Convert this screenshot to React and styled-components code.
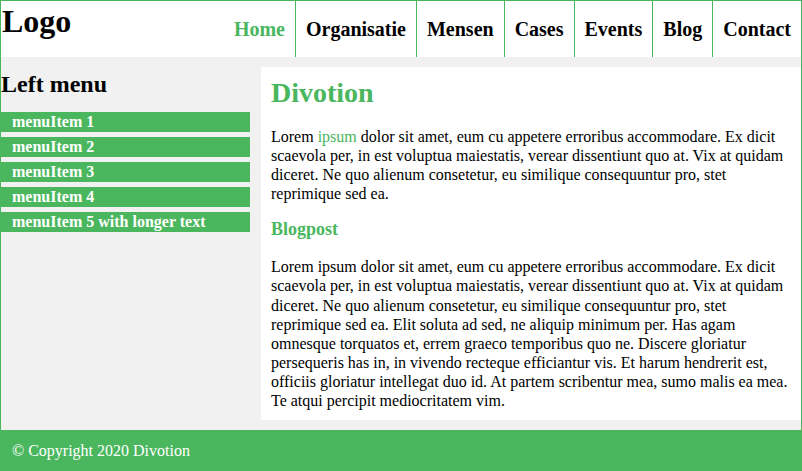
import React from 'react';
import styled, { createGlobalStyle } from 'styled-components';

const GREEN = '#4ab75e';

const GlobalStyle = createGlobalStyle`
  html, body {
    margin: 0;
    padding: 0;
    background: #ffffff;
  }
  body {
    font-family: "Liberation Serif", "Times New Roman", serif;
    color: #000000;
  }
`;

const Page = styled.div`
  width: 802px;
  box-sizing: border-box;
  border: 1px solid ${GREEN};
  border-bottom: none;
  display: flex;
  flex-direction: column;
`;

const Header = styled.header`
  height: 56px;
  display: flex;
  justify-content: space-between;
  background: #ffffff;
`;

const Logo = styled.h1`
  margin: 0;
  padding: 2px 0 0 1px;
  font-size: 32px;
  font-weight: 700;
  line-height: normal;
`;

const Nav = styled.nav`
  display: flex;
  align-items: stretch;
`;

const NavItem = styled.a`
  display: flex;
  align-items: center;
  padding: 0 10px;
  font-size: 20px;
  font-weight: 700;
  text-decoration: none;
  color: ${(p) => (p.$active ? GREEN : '#000000')};
  & + & {
    border-left: 1px solid ${GREEN};
  }
`;

const Main = styled.main`
  display: flex;
  align-items: flex-start;
  background: #f1f1f1;
  padding-bottom: 10px;
`;

const Sidebar = styled.aside`
  width: 260px;
  flex-shrink: 0;
`;

const SideTitle = styled.h2`
  margin: 14px 0 14px;
  font-size: 24px;
  font-weight: 700;
  line-height: 27px;
`;

const MenuList = styled.ul`
  list-style: none;
  margin: 0;
  padding: 0;
`;

const MenuItem = styled.li`
  width: 249px;
  height: 20px;
  line-height: 20px;
  margin-bottom: 5px;
  padding-left: 11px;
  box-sizing: border-box;
  background: ${GREEN};
  color: #ffffff;
  font-size: 16px;
  font-weight: 700;
`;

const Content = styled.section`
  flex: 1;
  margin-top: 10px;
  background: #ffffff;
  padding: 10px;
`;

const Title = styled.h1`
  margin: 0 0 18px;
  font-size: 28px;
  font-weight: 700;
  line-height: 32px;
  color: ${GREEN};
`;

const SubTitle = styled.h3`
  margin: 0 0 17px;
  font-size: 18px;
  font-weight: 700;
  line-height: 21px;
  color: ${GREEN};
`;

const Text = styled.p`
  margin: 0 0 16px;
  font-size: 16px;
  line-height: 19.1px;
  &:last-child {
    margin-bottom: 0;
  }
`;

const Highlight = styled.a`
  color: ${GREEN};
  text-decoration: none;
`;

const Footer = styled.footer`
  height: 41px;
  display: flex;
  align-items: center;
  padding-left: 11px;
  background: ${GREEN};
  color: #ffffff;
  font-size: 16px;
`;

const navLinks = ['Home', 'Organisatie', 'Mensen', 'Cases', 'Events', 'Blog', 'Contact'];
const menuItems = ['menuItem 1', 'menuItem 2', 'menuItem 3', 'menuItem 4', 'menuItem 5 with longer text'];

const App = () => {
  return (
    <>
      <GlobalStyle />
      <Page>
        <Header>
          <Logo>Logo</Logo>
          <Nav>
            {navLinks.map((link) => (
              <NavItem key={link} $active={link === 'Home'}>
                {link}
              </NavItem>
            ))}
          </Nav>
        </Header>
        <Main>
          <Sidebar>
            <SideTitle>Left menu</SideTitle>
            <MenuList>
              {menuItems.map((item) => (
                <MenuItem key={item}>{item}</MenuItem>
              ))}
            </MenuList>
          </Sidebar>
          <Content>
            <Title>Divotion</Title>
            <Text>
              Lorem <Highlight>ipsum</Highlight> dolor sit amet, eum cu appetere erroribus accommodare. Ex dicit
              scaevola per, in est voluptua maiestatis, verear dissentiunt quo at. Vix at quidam diceret. Ne quo
              alienum consetetur, eu similique consequuntur pro, stet reprimique sed ea.
            </Text>
            <SubTitle>Blogpost</SubTitle>
            <Text>
              Lorem ipsum dolor sit amet, eum cu appetere erroribus accommodare. Ex dicit scaevola per, in est
              voluptua maiestatis, verear dissentiunt quo at. Vix at quidam diceret. Ne quo alienum consetetur, eu
              similique consequuntur pro, stet reprimique sed ea. Elit soluta ad sed, ne aliquip minimum per. Has
              agam omnesque torquatos et, errem graeco temporibus quo ne. Discere gloriatur persequeris has in, in
              vivendo recteque efficiantur vis. Et harum hendrerit est, officiis gloriatur intellegat duo id. At
              partem scribentur mea, sumo malis ea mea. Te atqui percipit mediocritatem vim.
            </Text>
          </Content>
        </Main>
        <Footer>© Copyright 2020 Divotion</Footer>
      </Page>
    </>
  );
};

export default App;
